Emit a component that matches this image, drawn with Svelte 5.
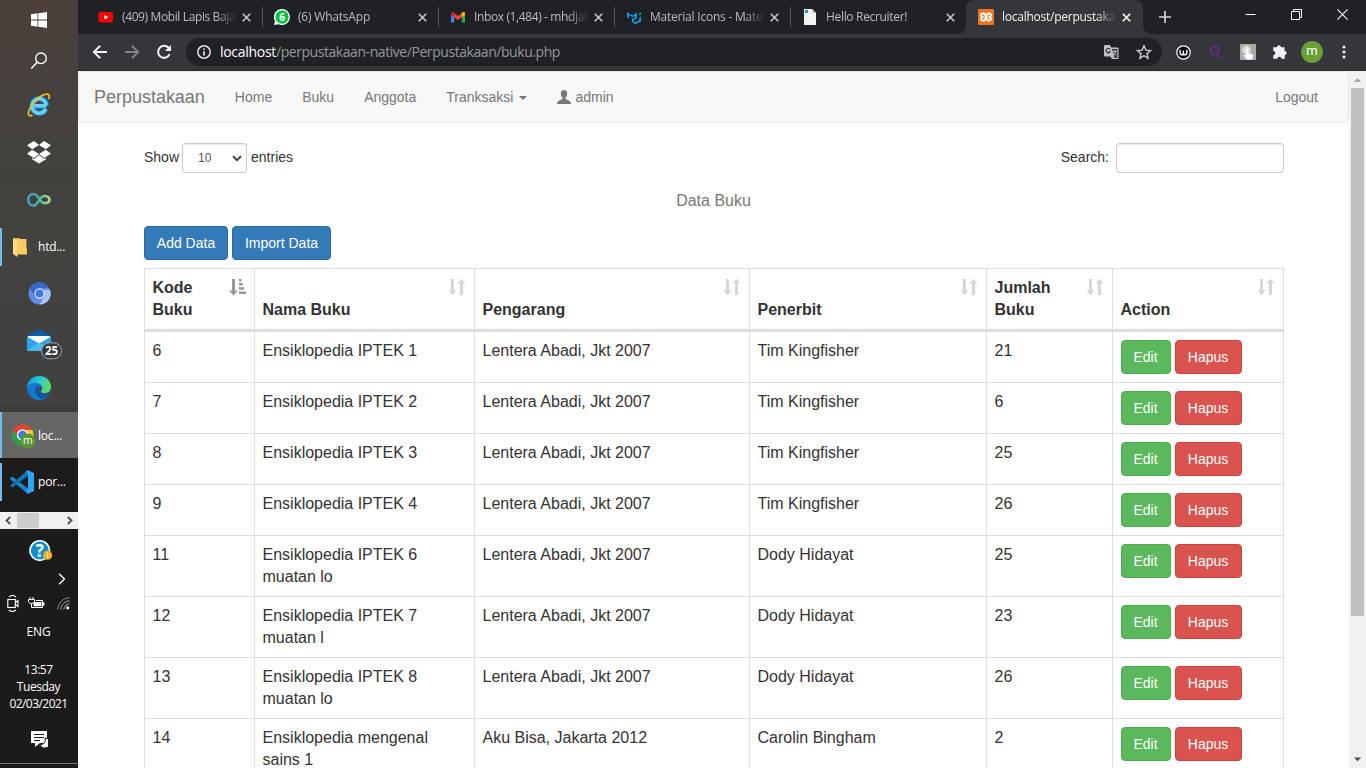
<script>
  const tabs = [
    { icon: 'youtube', title: '(409) Mobil Lapis Baja', ls: -0.38 },
    { icon: 'whatsapp', title: '(6) WhatsApp', ls: -0.2 },
    { icon: 'gmail', title: 'Inbox (1,484) - mhdjak', ls: -0.38 },
    { icon: 'mui', title: 'Material Icons - Mater', ls: -0.22 },
    { icon: 'doc', title: 'Hello Recruiter!', ls: -0.32 },
    { icon: 'xampp', title: 'localhost/perpustakaa', ls: -0.25, active: true }
  ];
  const tasks = ['ie', 'dropbox', 'infinity', 'folder', 'chromium', 'mail', 'edge', 'chrome', 'vscode'];
  const labels = { folder: 'htd...', chrome: 'loc...', vscode: 'por...' };
  const heads = ['Kode Buku', 'Nama Buku', 'Pengarang', 'Penerbit', 'Jumlah Buku', 'Action'];
  const L = 'Lentera Abadi, Jkt 2007';
  const books = [
    ['6', 'Ensiklopedia IPTEK 1', L, 'Tim Kingfisher', '21'],
    ['7', 'Ensiklopedia IPTEK 2', L, 'Tim Kingfisher', '6'],
    ['8', 'Ensiklopedia IPTEK 3', L, 'Tim Kingfisher', '25'],
    ['9', 'Ensiklopedia IPTEK 4', L, 'Tim Kingfisher', '26'],
    ['11', 'Ensiklopedia IPTEK 6 muatan lo', L, 'Dody Hidayat', '25'],
    ['12', 'Ensiklopedia IPTEK 7 muatan l', L, 'Dody Hidayat', '23'],
    ['13', 'Ensiklopedia IPTEK 8 muatan lo', L, 'Dody Hidayat', '26'],
    ['14', 'Ensiklopedia mengenal sains 1', 'Aku Bisa, Jakarta 2012', 'Carolin Bingham', '2']
  ];
</script>

<div class="desktop">
  <aside>
    <div class="start"><svg width="16" height="16" viewBox="0 0 16 16" fill="#fff"><path d="M0 2.2 6.5 1.3V7.6H0zM7.3 1.2 16 0V7.6H7.3zM0 8.4H6.5V14.7L0 13.8zM7.3 8.4H16V16L7.3 14.8z"/></svg></div>
    <div class="find"><svg width="18" height="18" viewBox="0 0 18 18" fill="none" stroke="#fff" stroke-width="1.3"><circle cx="11" cy="6.3" r="5.3"/><path d="M7.2 10.2 1.3 16.5" stroke-width="1.6"/></svg></div>
    {#each tasks as t}
      <div class="task" class:active={t === 'chrome'} class:dark={t === 'vscode'} class:labelled={labels[t]}>
        {#if labels[t]}<i class="mark"></i>{/if}
        {#if t === 'ie'}
          <svg class="ie" width="24" height="24" viewBox="0 0 24 24" fill="none"><path d="M19.3 13.2H7.2M18.8 16.2A7.3 7.3 0 1 1 19.6 12.5" stroke="#168ed0" stroke-width="5"/><path d="M19.3 12.8H7.2M18.8 16A7.2 7.2 0 1 1 19.4 12.5" stroke="#6bd1f8" stroke-width="3.4"/><path d="M5.5 22C2 24 .4 21.5 2 17.5 4 11.5 12 2.5 19 1.2c3.5-.8 4 1.8 2.5 5" stroke="#f0b923" stroke-width="1.8"/></svg>
        {:else if t === 'dropbox'}
          <svg width="24" height="23" viewBox="0 0 24 23" fill="#fff"><path d="M7 0 12 4 5.2 8.3 0 4.2zM17 0 24 4.2 18.8 8.3 12 4zM5.2 8.7 12 13 7 17 0 12.8zM18.8 8.7 24 12.8 17 17 12 13zM12 13.9 17 18 19 16.8V18.3L12 22.6 5 18.3V16.8L7 18z"/></svg>
        {:else if t === 'infinity'}
          <svg width="24" height="16" viewBox="0 0 24 16" fill="none" stroke-width="2.6"><defs><linearGradient id="inf"><stop stop-color="#3e9dbb"/><stop offset=".5" stop-color="#4aafa5"/><stop offset="1" stop-color="#a6dc83"/></linearGradient></defs><path stroke="url(#inf)" d="M12.3 8.3C9.8 12.2 8.2 13.6 6.4 13.6A5.3 5.8 0 0 1 6.4 2c3.8 0 5.1 4.2 7.5 7.2 2.5 3.1 8.6 2.3 8.6-1.5S16.6 2.8 14 5.8c-.7.9-1.1 1.7-1.7 2.5z"/></svg>
        {:else if t === 'folder'}
          <svg width="15" height="20" viewBox="0 0 15 20"><path fill="#e8b94c" d="M1 1H6L7 2H13.5V17H1z"/><path fill="#ffdf82" d="M0 1 4.5 4.5V20L0 17z"/><path fill="#f6cb62" d="M5 2H13V11L14 12V17.5H5z"/></svg>
        {:else if t === 'chromium'}
          <svg width="23" height="23" viewBox="0 0 24 24"><circle cx="12" cy="12" r="11.5" fill="#5b8ae8"/><path fill="#3568c7" d="M2 6A11.5 11.5 0 0 1 22 6L12 6.5 7 15z"/><path fill="#a4c3f9" d="M12 23.5 17 14.5V8h6A11.5 11.5 0 0 1 12 23.5z"/><circle cx="12" cy="12" r="5.4" fill="#e6effd"/><circle cx="12" cy="12" r="4.2" fill="#4678d8"/></svg>
        {:else if t === 'mail'}
          <svg class="mail" width="37" height="32" viewBox="0 0 37 32"><path fill="#0b5cab" d="M0 8 12 1 24 8V18H0z"/><path fill="#fff" d="M1 8H23V15L12 19 1 15z"/><path fill="#2ea3ec" d="M0 8.5 12 15.5 24 8.5V23H0z"/><path fill="#62c9f6" d="M0 23 12 14 24 23z" opacity=".55"/><rect x="14.5" y="14.8" width="20" height="16" rx="8" fill="#33383b" stroke="#a5a7a8"/><text x="24.5" y="26.8" fill="#fff" text-anchor="middle" font-size="11.5" font-weight="700">25</text></svg>
        {:else if t === 'edge'}
          <svg width="24" height="24" viewBox="0 0 24 24"><defs><linearGradient id="ed" x1="0" y1=".3" x2="1" y2=".5"><stop stop-color="#1996e2"/><stop offset=".5" stop-color="#2fc6d4"/><stop offset="1" stop-color="#66df55"/></linearGradient></defs><circle cx="12" cy="12" r="12" fill="#1279ce"/><path fill="url(#ed)" d="M0 11.5C.8 4 6.5 0 12 0c7 0 12 5 12 10.5 0 4.5-3.4 6.5-6.6 6.5-3.2 0-4-1.4-3-2.5C17.3 11 13.5 7 9 7 4.5 7 1.2 8.8 0 11.5z"/><path fill="#0c52a0" d="M11 9.3C6.2 11.5 7 21 15.5 22.7c3.3-.9 5.8-2.9 7-5.1C16 20.6 9.5 16.5 11 9.3z"/><path fill="#44484a" d="M11.5 10.2c2.2-.4 4.2 2 2.6 4.2-1 1.5.4 2.7 3 2.8 2.6.1 4.6-.9 5.5-1.8l.6 1.6C18 20.7 9.7 17.4 11.5 10.2z"/></svg>
        {:else if t === 'chrome'}
          <svg width="25" height="26" viewBox="0 0 25 26"><circle cx="11.5" cy="12" r="11" fill="#2e9c4f"/><path fill="#dc4437" d="M2 6.5A11 11 0 0 1 21.3 7H11.5L7 15z"/><path fill="#fcc934" d="M11.5 7h9.8A11 11 0 0 1 12 23L16 15z"/><circle cx="11.5" cy="12" r="5.7" fill="#fff"/><circle cx="11.5" cy="12" r="4.4" fill="#3f7de0"/><circle cx="16.8" cy="18" r="7.6" fill="#5b962f"/><text x="16.8" y="21.2" fill="#fff" text-anchor="middle" font-size="10.5">m</text></svg>
        {:else}
          <svg width="24" height="24" viewBox="0 0 24 24"><path fill="#1688d2" d="M0 8.5 2.3 6.5 18 18.5V24L1 10z"/><path fill="#1071b8" d="M0 15.7 17.5 0 18.5 5.5 2.3 17.6z"/><path fill="#2aa6f2" d="M17.5 0 24 3V21L17.5 24 16.5 22.5 18 19V5L16.5 1.5z"/></svg>
        {/if}
        {#if labels[t]}<span>{labels[t]}</span>{/if}
      </div>
    {/each}
    <div class="hbar">
      <svg width="17" height="17" viewBox="0 0 17 17" fill="none" stroke="#505050" stroke-width="1.8"><path d="M10.2 5 6.5 8.5 10.2 12"/></svg><i></i>
      <svg class="r" width="17" height="17" viewBox="0 0 17 17" fill="none" stroke="#505050" stroke-width="1.8"><path d="M6.8 5 10.5 8.5 6.8 12"/></svg>
    </div>
    <div class="help"><svg width="24" height="22" viewBox="0 0 24 22"><circle cx="10.8" cy="10.6" r="9.8" fill="#118fcd" stroke="#fff" stroke-width="1.6"/><text x="10.8" y="17" font-size="17" font-weight="700" fill="#fff" text-anchor="middle">?</text><circle cx="18.6" cy="15.2" r="4.6" fill="#f3ad21"/><path d="M18.6 12.2v1M18.6 14.2v3.5" stroke="#fff" stroke-width="1.2"/></svg></div>
    <div class="more"><svg width="8" height="12" viewBox="0 0 8 12" fill="none" stroke="#fff" stroke-width="1.3"><path d="M1 .7 6.5 6 1 11.3"/></svg></div>
    <div class="tray">
      <svg width="12" height="17" viewBox="0 0 12 17" fill="none" stroke="#fff" stroke-width="1.1"><path d="M2 2C4 .3 7 .3 9 2M2 15c2 1.7 5 1.7 7 0"/><rect x=".8" y="4.5" width="7.5" height="8"/><path d="M8.5 7.5 11 5.5v6L8.5 9.5"/></svg>
      <svg width="17" height="13" viewBox="0 0 17 13" fill="none" stroke="#fff"><path d="M2 0V2M5 0V2M.5 2.5H6.5V5Q5.5 6.5 3.5 6.5 1.5 6.5.5 5zM3.5 6.5V10.5H14.5V3.5H8"/><path fill="#fff" stroke="none" d="M5.5 5H13.5V9.3H5.5zM15 5.5H16.5V8.5H15z"/></svg>
      <svg width="13" height="13" viewBox="0 0 13 13" fill="none"><path stroke="#888" d="M.7 12.5C1 6 6 1 12.5.7"/><path stroke="#aaa" d="M3.8 12.5C4 7.8 7.8 4 12.5 3.8M6.8 12.5C7 9.5 9.5 7 12.5 6.8" /><circle cx="10.7" cy="10.8" r="1.6" fill="#fff"/></svg>
    </div>
    <div class="lang">ENG</div>
    <div class="clock"><span>13:57</span><span>Tuesday</span><span class="date">02/03/2021</span></div>
    <div class="note"><svg width="17" height="17" viewBox="0 0 17 17"><path fill="#fff" d="M0 0H16V12H9L4 16V12H0z"/><path stroke="#1d1d1d" d="M3 3.5H13M3 6.5H13M3 9.5H9"/><path fill="#fff" stroke="#1d1d1d" d="M14 7A5 5 0 1 1 9 13.5 4.7 4.7 0 0 0 14 7z"/></svg></div>
    <div class="edge-line"></div>
  </aside>

  <section class="browser">
    <header class="strip">
      <div class="tabs">
        {#each tabs as t}
          <div class="tab" class:on={t.active}>
            <svg width="16" height="16" viewBox="0 0 16 16">
              {#if t.icon === 'youtube'}<rect x=".5" y="3" width="14.5" height="10.5" rx="2.5" fill="#f00"/><path fill="#fff" d="M6.3 6 10.3 8.2 6.3 10.4z"/>
              {:else if t.icon === 'whatsapp'}<path fill="#fff" d="M0 16 1 12A8 8 0 1 1 4.5 15.2z"/><circle cx="8" cy="8" r="6.7" fill="#0dc143"/><text x="8" y="11.6" text-anchor="middle" font-size="10" font-weight="700" fill="#fff">6</text>
              {:else if t.icon === 'gmail'}<path fill="#4285f4" d="M1 4V13.5H4.2V6.5z"/><path fill="#34a853" d="M11.8 6.5V13.5H15V4z"/><path fill="#ea4335" d="M3 3 8 7 13 3V7.5L8 11.2 3 7.5z"/><path fill="#c5221f" d="M1 4.2Q1.3 2.2 4.2 3.7V8.2L1 5.8z"/><path fill="#fbbc04" d="M11.8 4Q14.7 2 15 4.5V6L11.8 8.2z"/>
              {:else if t.icon === 'mui'}<g fill="#149bec"><path d="M1 3.2 6.5 6.4 11 3.6V9L7.6 11V12.2L9.6 13.3 13.2 11.2V8.6L15 7.6V12.2L9.6 15.2 5.9 13V10L9.2 8.1V6.5L6.5 8.2 2.8 6.1V9.6L1 8.6z"/><path d="M13.2 4.2 15 3.2V5.6L13.2 6.6z"/></g>
              {:else if t.icon === 'doc'}<path fill="#f1f3f4" d="M2 0H10L14 4V16H2z"/><path fill="#c3c6c9" d="M10 0 14 4H10z"/><path fill="#2091c8" d="M3 1H6V4H3z"/>
              {:else}<rect width="16" height="16" rx="1" fill="#ee7623"/><path d="M5 4.5Q2.7 4.5 3 6.3 3.3 8 5.5 8 3 8.2 3 10q.2 1.8 2.2 1.6Q7.6 11.5 7.6 8.5h.8q0 3 2.4 3.1 2 .1 2.2-1.6Q13 8.2 10.5 8 12.7 8 13 6.3 13.2 4.5 11 4.5 8.5 4.5 8.4 7.5H7.6Q7.5 4.5 5 4.5z" fill="none" stroke="#fff" stroke-width="1.9"/>{/if}
            </svg>
            <span class="title" style="letter-spacing:{t.ls}px">{t.title}</span>
            <svg class="x" width="9" height="9" viewBox="0 0 9 9" stroke-width="1.6"><path d="M.8.8 8.2 8.2M8.2.8.8 8.2"/></svg>
          </div>
        {/each}
      </div>
      <svg class="plus" width="12" height="12" viewBox="0 0 12 12" stroke="#d0d2d5" stroke-width="1.7"><path d="M6 0V12M0 6H12"/></svg>
      <div class="win">
        <svg width="11" height="11" viewBox="0 0 11 11" stroke="#fff"><path d="M.5 5.5H10.5"/></svg>
        <svg width="11" height="11" viewBox="0 0 11 11" stroke="#fff" fill="none"><path d="M.5 2.5H8.5V10.5H.5zM2.5 2.5V.5H10.5V8.5H8.5"/></svg>
        <svg width="11" height="11" viewBox="0 0 11 11" stroke="#fff" stroke-width="1.1"><path d="M.4.4 10.6 10.6M10.6.4.4 10.6"/></svg>
      </div>
    </header>
    <div class="toolbar">
      <div class="nav-ic">
        <svg width="16" height="16" viewBox="0 0 16 16" fill="none" stroke="#f1f3f4" stroke-width="1.9"><path d="M15 8H2.2M8.2 1.7 1.8 8 8.2 14.3"/></svg>
        <svg width="16" height="16" viewBox="0 0 16 16" fill="none" stroke="#818386" stroke-width="1.9"><path d="M1 8H13.8M7.8 1.7 14.2 8 7.8 14.3"/></svg>
        <svg width="16" height="16" viewBox="0 0 16 16" fill="none" stroke="#f1f3f4" stroke-width="2"><path d="M13.6 10.2A6 6 0 1 1 12.5 3.8L13.5 5"/><path d="M15 1V7H9z" fill="#f1f3f4" stroke="none"/></svg>
      </div>
      <div class="omni">
        <svg width="14" height="14" viewBox="0 0 14 14" fill="none" stroke="#e4e6e8" stroke-width="1.5"><circle cx="7" cy="7" r="6.2"/><path d="M7 6.2V10.4M7 3.4V4.9" stroke-width="1.7"/></svg>
        <span class="url"><b>localhost</b>/perpustakaan-native/Perpustakaan/buku.php</span>
        <svg class="tr" width="15" height="15" viewBox="0 0 15 15"><path fill="#bfc1c3" d="M0 1Q0 0 1 0H6L7.2 2.5H13.5Q14.5 2.5 14.5 3.5V13Q14.5 14 13.5 14H8L6.5 11.5H1Q0 11.5 0 10.5z"/><path fill="#333539" d="M7.8 4H13.3V12.8H8.8L10.5 11.5z"/><path d="M6 4.3A2.2 2.2 0 1 0 6.2 6.8H4.3" fill="none" stroke="#333539" stroke-width="1.1"/><path d="M8.6 6.3H12.8M10.6 5V6.3M12 6.5Q11 9.2 9 10M9.3 7.5 12 10.5" fill="none" stroke="#bfc1c3"/></svg>
        <svg width="16" height="16" viewBox="0 0 16 16" fill="none" stroke="#c8cacc" stroke-width="1.4"><path d="M8 1.8 9.9 6.1 14.6 6.5 11 9.6 12.1 14.2 8 11.7 3.9 14.2 5 9.6 1.4 6.5 6.1 6.1z"/></svg>
      </div>
      <div class="ext">
        <svg width="15" height="15" viewBox="0 0 15 15"><circle cx="7.5" cy="7.5" r="6.7" fill="#000" stroke="#fff" stroke-width="1.2"/><path d="M4 4.8V8.2Q4 9.8 5.7 9.8 7.4 9.8 7.4 8V5.5 8Q7.4 9.8 9.1 9.8 10.8 9.8 10.8 8.2V4.8" fill="none" stroke="#fff" stroke-width="1.4"/></svg>
        <svg class="lens" width="15" height="15" viewBox="0 0 15 15" fill="none" stroke="#6d2a9e" stroke-width="1.6"><circle cx="6.7" cy="5.5" r="4"/><path d="M9 9 11.5 13.5"/></svg>
        <svg width="16" height="16" viewBox="0 0 16 16"><path fill="#aaa9a7" d="M0 0H16V16H0z"/><circle cx="6.5" cy="6" r="4.3" fill="#e0e0df" stroke="#c6c6c5"/><path fill="#fff" d="M6 5Q7 4 8 5V9L12 10Q13.3 10.5 13 12L12.3 15.5H6.5L3.5 11.5Q4 10.2 6 11.5z"/></svg>
        <svg width="16" height="16" viewBox="0 0 16 16" fill="#f1f3f4"><path d="M1.3 3.3H5A2 2 0 0 1 9 3.3H12.5V7A2 2 0 0 1 12.8 11V14.8H9.5A2 2 0 0 0 5.3 14.8H1.3V11.2A2 2 0 0 0 1.3 7.1z"/></svg>
        <span class="av">m</span>
        <svg width="4" height="14" viewBox="0 0 4 14" fill="#e4e6e8"><circle cx="2" cy="2" r="1.6"/><circle cx="2" cy="7" r="1.6"/><circle cx="2" cy="12" r="1.6"/></svg>
      </div>
    </div>

    <div class="view">
      <main>
        <nav>
          <span class="brand">Perpustakaan</span>
          <span>Home</span><span>Buku</span><span>Anggota</span>
          <span class="drop">Tranksaksi<i></i></span>
          <span class="user"><svg width="14" height="14" viewBox="0 0 14 14" fill="#777"><path d="M7 0C9 0 10.2 1.3 10.2 3.4 10.2 5.5 9.3 6.8 8.6 7.6 8.3 8.8 8.6 9.2 9.5 9.6L12.5 11Q14 11.8 14 14H0Q0 11.8 1.5 11L4.5 9.6C5.4 9.2 5.7 8.8 5.4 7.6 4.7 6.8 3.8 5.5 3.8 3.4 3.8 1.3 5 0 7 0z"/></svg>admin</span>
          <span class="out">Logout</span>
        </nav>
        <div class="content">
          <div class="controls">
            <span>Show</span>
            <div class="select">10<svg width="10" height="7" viewBox="0 0 10 7" fill="none" stroke="#444" stroke-width="2"><path d="M1 1.2 5 5.2 9 1.2"/></svg></div>
            <span>entries</span>
            <label><span>Search:</span><input aria-label="Search" /></label>
          </div>
          <div class="caption">Data Buku</div>
          <div class="actions"><button class="blue">Add Data</button><button class="blue">Import Data</button></div>
          <div class="table">
            <div class="row head">
              {#each heads as h, i}
                <div class="cell"><span>{h}</span>
                  <svg class="sort" width="18" height="18" viewBox="0 0 18 18">
                    {#if i === 0}<path fill="#999" d="M3 1H6V12.5H9L4.5 17.5 0 12.5H3zM10 1H12.5V3.4H10zM10 5H13.7V7.5H10zM10 9.2H15.2V11.7H10zM10 13.5H17V16H10z"/>
                    {:else}<path fill="#d6d6d6" d="M3 1H6V12.5H8.5L4.5 17.3.5 12.5H3zM12 17H15V5.5H17.5L13.5 .7 9.5 5.5H12z"/>{/if}
                  </svg>
                </div>
              {/each}
            </div>
            {#each books as b}
              <div class="row">
                {#each b as v}<div class="cell">{v}</div>{/each}
                <div class="cell btns"><button class="green">Edit</button><button class="red">Hapus</button></div>
              </div>
            {/each}
          </div>
        </div>
      </main>
      <div class="vbar">
        <svg width="17" height="17" viewBox="0 0 17 17" fill="#a3a3a3"><path d="M5 11 8.5 7.2 12 11z"/></svg>
        <i></i>
        <svg class="down" width="17" height="17" viewBox="0 0 17 17" fill="#505050"><path d="M5 6.5 8.5 10.3 12 6.5z"/></svg>
      </div>
    </div>
  </section>
</div>

<style>
  :global(body) { margin: 0; overflow: hidden; }
  * { box-sizing: border-box; }
  svg { display: block; flex: none; }
  .desktop { display: flex; width: 1366px; height: 768px; overflow: hidden; font-family: "Liberation Sans", Arial, sans-serif; }
  aside { width: 78px; flex: none; display: flex; flex-direction: column; color: #fff; font: 12px/17px "Open Sans", sans-serif; background: linear-gradient(#4b403b 0, #45413e 100px, #42423f 240px, #41413f 400px, #1d1c1a 459px, #1d1c1b 512px, #1b1b1b 530px); }
  aside > div { display: flex; align-items: center; justify-content: center; flex: none; }
  .start { height: 40px; }
  .find { height: 42px; }
  .task { height: 47px; }
  .ie { margin-bottom: 2px; }
  .task.labelled { justify-content: flex-start; position: relative; }
  .task.labelled svg { margin-left: 9px; }
  .task.labelled span { margin-left: 4px; font-size: 12px; letter-spacing: -.2px; }
  .task.labelled svg[width="15"] { margin: 1px 6px 0 11px; }
  .task.active svg { margin: 2px -2px 0 9px; }
  .task.dark svg { margin-left: 8px; }
  .mark { width: 2px; height: 38px; background: #76b9ed; }
  .active { background: #656564; background-clip: content-box; padding-top: 1px; }
  .active .mark { height: 46px; }
  .dark { background: #1d1c1a; }
  .mail { margin: 7px 0 0 12px; }
  .hbar { height: 17px; margin-top: 7px; background: #f0f0f0; }
  aside > .hbar { justify-content: flex-start; }
  .hbar i { width: 22px; height: 15px; background: #cdcdcd; }
  .hbar .r { margin-left: auto; }
  .help { height: 44px; padding-left: 3px; }
  .more { height: 12px; }
  aside > .more { justify-content: flex-end; padding-right: 12px; }
  .tray { height: 37px; gap: 12px; padding-right: 1px; }
  .tray svg:nth-child(2) { margin-left: -3px; }
  .lang { height: 17px; letter-spacing: -.2px; padding-right: 1px; margin-top: 1px; }
  .clock { flex-direction: column; height: 51px; margin-top: 21px; padding-right: 1px; }
  .clock span { letter-spacing: -.45px; }
  .clock .date { letter-spacing: -.55px; }
  .note { height: 17px; margin-top: 19px; }
  .edge-line { height: 1px; margin-top: 15px; background: #777; }

  .browser { flex: 1; min-width: 0; display: flex; flex-direction: column; }
  .strip { height: 34px; flex: none; display: flex; align-items: center; background: #202124; }
  .tabs { display: flex; height: 34px; padding-left: 8px; }
  .tab { position: relative; width: 176px; display: flex; align-items: center; padding: 0 11px 0 12px; color: #b9bcc0; font: 12px/16px "Open Sans", sans-serif; }
  .tab:not(.on)::after { content: ""; position: absolute; right: -1px; top: 7px; width: 1px; height: 20px; background: #55575b; }
  .tab:nth-child(5)::after { display: none; }
  .tab svg { font-family: "Open Sans", sans-serif; }
  .title { flex: 1; overflow: hidden; white-space: nowrap; margin: 0 5px 0 8px; -webkit-mask-image: linear-gradient(90deg, #000 82%, transparent); mask-image: linear-gradient(90deg, #000 82%, transparent); }
  .x { stroke: #c6c8cb; }
  .tab.on { width: 177px; padding-right: 12px; background: #35363a; border-radius: 8px 8px 0 0; color: #f1f3f4; }
  .on .x { stroke: #fff; }
  .on::before, .on::after { content: ""; position: absolute; bottom: 0; width: 8px; height: 8px; }
  .on::before { left: -8px; background: radial-gradient(circle at 0 0, #202124 7.5px, #35363a 8px); }
  .on::after { right: -8px; background: radial-gradient(circle at 100% 0, #202124 7.5px, #35363a 8px); }
  .plus { margin-left: 16px; }
  .win { display: flex; gap: 35px; margin: -6px 18px 0 auto; }
  .toolbar { height: 37px; flex: none; display: flex; align-items: center; background: #35363a; border-bottom: 1px solid #292a2d; }
  .nav-ic { display: flex; gap: 16px; padding-left: 14px; }
  .omni { width: 976px; height: 28px; margin-left: 14px; border-radius: 14px; background: #202124; display: flex; align-items: center; padding: 0 10px 0 11px; }
  .url { margin-left: 9px; font: 14px/20px "Open Sans", sans-serif; color: #94989c; letter-spacing: -.44px; white-space: nowrap; }
  .url b { font-weight: 400; color: #fff; letter-spacing: -.3px; }
  .tr { margin-left: auto; margin-right: 17px; }
  .ext { display: flex; align-items: center; gap: 16px; margin-left: 14px; }
  .lens { margin: 0 1px; }
  .av { width: 22px; height: 22px; margin: 0 3px 0 -3px; border-radius: 50%; background: #689f38; color: #fff; font: 13px/20px Roboto, sans-serif; text-align: center; }

  .view { flex: 1; display: flex; min-height: 0; background: #fff; }
  main { width: 1271px; overflow: hidden; color: #333; font-size: 14px; line-height: 20px; }
  nav { height: 52px; display: flex; align-items: center; border: 1px solid #e7e7e7; border-radius: 4px; background: #f8f8f8; color: #777; padding: 0 30px 0 15px; }
  nav span { margin-right: 30px; }
  nav .brand { font-size: 18px; letter-spacing: -.02px; }
  .drop, .user { display: flex; align-items: center; }
  .drop i { border: 4px solid transparent; border-top-color: #777; border-bottom: 0; margin: 2px 0 0 6px; }
  .user svg { margin-right: 4px; }
  nav .out { margin: 0 0 0 auto; }
  .content { width: 1140px; margin: 20px 0 0 66px; }
  .controls { display: flex; align-items: center; height: 30px; }
  .controls span { margin-top: -2px; }
  .select { width: 65px; height: 30px; display: flex; align-items: center; justify-content: space-between; margin: 0 4px 0 3px; padding: 0 4px 0 15px; border: 1px solid #ccc; border-radius: 3px; font-size: 12px; color: #555; box-shadow: inset 0 1px 1px rgba(0,0,0,.075); }
  label { margin-left: auto; display: flex; align-items: center; }
  input { width: 168px; height: 30px; margin-left: 7px; border: 1px solid #ccc; border-radius: 3px; background: #fff; box-shadow: inset 0 1px 1px rgba(0,0,0,.075); }
  .caption { height: 53px; line-height: 56px; font-size: 16px; text-align: center; color: #777; padding-right: 1px; }
  .actions { display: flex; gap: 4px; height: 34px; }
  button { height: 34px; padding: 0; border: 1px solid; border-radius: 4px; color: #fff; font: 14px/20px "Liberation Sans", Arial, sans-serif; white-space: nowrap; }
  .blue { width: 84px; background: #337ab7; border-color: #2e6da4; }
  .blue + .blue { width: 99px; }
  .green { width: 50px; background: #5cb85c; border-color: #4cae4c; }
  .red { width: 67px; background: #d9534f; border-color: #d43f3a; }
  .table { margin-top: 8px; border: 1px solid #ddd; border-width: 1px 1px 0 0; font-size: 16px; line-height: 22px; }
  .row { display: grid; grid-template-columns: 110px 220px 275px 237px 126px 171px; border-bottom: 1px solid #ddd; }
  .head { border-bottom-width: 3px; font-weight: 700; }
  .cell { padding: 8px 8px 8px 7.5px; border-left: 1px solid #ddd; min-height: 50px; }
  .row:not(.head) .cell:nth-child(2) { padding-right: 30px; }
  .head .cell { display: flex; align-items: flex-end; justify-content: space-between; height: 60px; }
  .head .cell:first-child span { width: 60px; }
  .head .cell:nth-child(5) span { width: 70px; }
  .sort { align-self: flex-start; margin-top: 1px; }
  .head .cell:first-child .sort { margin-right: -1px; }
  .btns { display: flex; gap: 4px; }
  .vbar { width: 17px; display: flex; flex-direction: column; background: #f1f1f1; }
  .vbar i { height: 528px; margin: 0 2px; background: #c1c1c1; }
  .vbar .down { margin-top: auto; }
</style>
